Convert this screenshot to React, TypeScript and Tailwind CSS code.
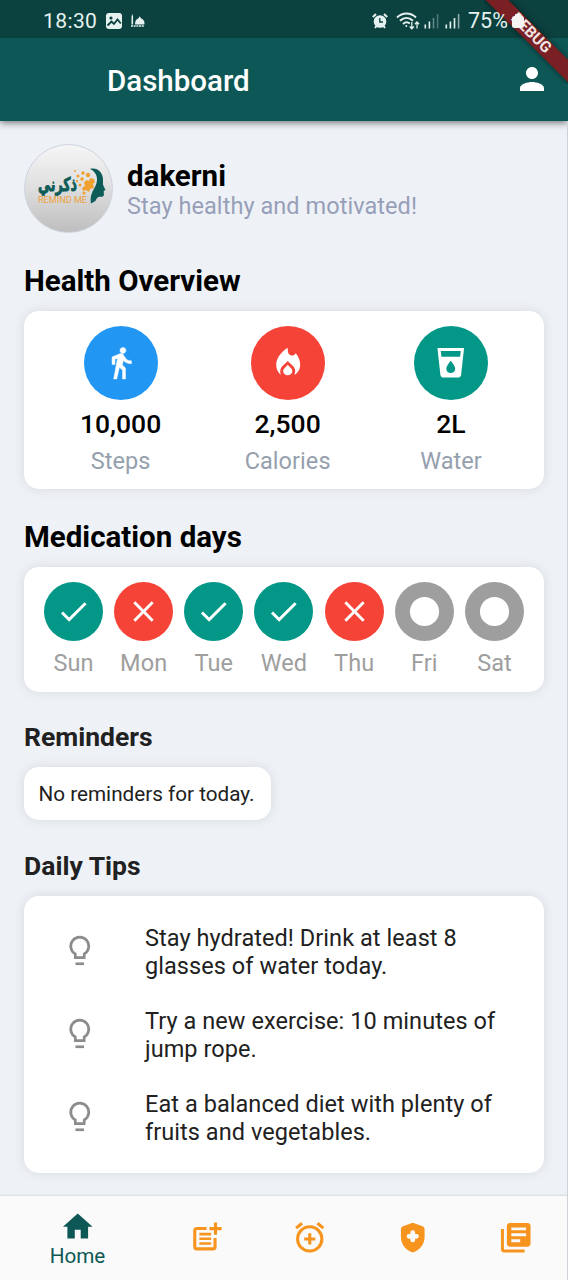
import type { ReactNode } from "react";
import {
  MdCheck,
  MdCircle,
  MdClose,
  MdHome,
  MdLibraryBooks,
  MdLocalDrink,
  MdPerson,
} from "react-icons/md";

type IconComponent = (props: { className?: string }) => ReactNode;

const cardShadow = "bg-white rounded-[15px] shadow-[0_0_12px_rgba(0,0,0,0.1)]";

function WalkIcon({ className }: { className?: string }) {
  return (
    <svg viewBox="0 0 24 24" className={className} fill="currentColor" stroke="currentColor" strokeWidth="0.300">
      <path d="M13.500 5.700c1.100 0 2-.9 2-2s-.9-2-2-2-2 .9-2 2 .9 2 2 2zM9.800 8.900L7.200 23h2.100l1.800-8 2.100 2v6h2v-7.500l-2.100-2 .6-3C14.800 11.700 16.800 12.700 19.200 12.700v-2c-1.900 0-3.500-.9-4.300-2.300l-1-1.600c-.4-.6-1-1-1.700-1-.3 0-.5.1-.8.1L6.100 8.100v5h2V9.600l1.700-.7" />
    </svg>
  );
}

function FlameIcon({ className }: { className?: string }) {
  return (
    <svg viewBox="0 0 24 24" className={className} fill="currentColor">
      <path d="M12 1.900C7 5 4.200 9.500 4.200 13.400c0 3 1.200 5.400 3.300 6.900-.5-1-.7-2-.5-3.300.3-2.500 2.500-3.500 5-6.200 2.500 2.700 4.800 3.700 5 6.200.1 1.300-.1 2.300-.6 3.300 2.400-1.300 4-3.800 4-6.900 0-3-1.200-5.700-3-7.800-.8 1.300-1.700 1.700-2.800 1.500-1.800-.3-2.800-1.600-2.600-5.200z" />
      <path d="M12 13.400c-1.800 2-3.100 2.800-3.100 4.300a3.100 2.800 0 0 0 6.200 0c0-1.500-1.300-2.300-3.100-4.300z" />
    </svg>
  );
}

function BulbIcon({ className }: { className?: string }) {
  return (
    <svg viewBox="0 0 24 24" className={className} fill="none" stroke="currentColor" strokeWidth="1.800">
      <path d="M9 16.700v-2.500a6.100 6.100 0 1 1 6 0v2.500z" />
      <path d="M9.100 20.800h5.800" />
    </svg>
  );
}

function NoteAddIcon({ className }: { className?: string }) {
  return (
    <svg viewBox="0 0 24 24" className={className} fill="none" stroke="currentColor" strokeWidth="2.100">
      <path d="M11.900 5.700H5.200A1.300 1.300 0 0 0 3.900 7v11.200a1.300 1.300 0 0 0 1.300 1.300h11.100a1.300 1.300 0 0 0 1.300-1.300v-6.100" />
      <path d="M7 9.500h8M7 12.700h8M7 15.900h8" strokeWidth="1.800" />
      <path d="M17.900 1.700v8.200M13.800 5.800H22" />
    </svg>
  );
}

function AlarmAddIcon({ className }: { className?: string }) {
  return (
    <svg viewBox="0 0 24 24" className={className} fill="none" stroke="currentColor" strokeWidth="2.100">
      <circle cx="12" cy="12.800" r="8.200" />
      <path d="M12 9v7.600M8.200 12.800h7.600M2.800 5.500l4-3.300M21.200 5.500l-4-3.300" />
    </svg>
  );
}

function ShieldIcon({ className }: { className?: string }) {
  return (
    <svg viewBox="0 0 24 24" className={className}>
      <path fill="currentColor" d="M10.600 2.300 5.400 4.300C4.500 4.600 4 5.400 4 6.300v5.200c0 5 3.500 9.200 8 10.500 4.500-1.300 8-5.500 8-10.500V6.300c0-.9-.5-1.700-1.400-2l-5.200-2c-.9-.4-1.900-.4-2.800 0z" />
      <path d="M12 8.500v5M9.500 11h5" stroke="#fafafa" strokeWidth="3.200" strokeLinecap="round" />
    </svg>
  );
}

function SignalBars({ dim }: { dim: number }) {
  return (
    <svg viewBox="0 0 15 16" className="h-[16px] w-[15px]" fill="#e6f2ef">
      <rect x="0.5" y="11.5" width="1.6" height="4" />
      <rect x="4.6" y="8.5" width="1.6" height="7" />
      <rect x="8.7" y="5" width="1.6" height="10.5" opacity={dim > 1 ? 0.4 : 1} />
      <rect x="12.8" y="1" width="1.6" height="14.5" opacity={dim > 1 ? 0.3 : 0.6} />
    </svg>
  );
}

function StatusBar() {
  return (
    <div className="relative z-10 flex h-[38px] items-center pl-[43px] text-[#e6f2ef]">
      <span className="w-[54px] pt-[3px] text-[21px] leading-[38px] tracking-[0.400px] whitespace-nowrap">18:30</span>
      <svg viewBox="0 0 16 16" className="mt-[3px] ml-[9px] h-[16px] w-[16px]">
        <rect width="16" height="16" rx="3" fill="#e6f2ef" />
        <circle cx="5" cy="5" r="1.6" fill="#0b413f" />
        <path d="M1.5 12.5 5.5 8.5 8 11 11.5 6.5 14.8 10.5" stroke="#0b413f" strokeWidth="1.8" fill="none" />
      </svg>
      <svg viewBox="0 0 14 14" className="mt-[3px] ml-[9px] h-[14px] w-[14px]" fill="#e6f2ef">
        <path d="M1.300 0 2.100 2.500V10.500H.5V2.500zM4.200 10.500C3.500 7 5.500 5.500 7.500 4.300L8.700 2.300 10 4.300c2 1.200 4.200 2.700 3.300 6.200z" />
        <path d="M0 12h13.5" stroke="#e6f2ef" strokeWidth="1.400" strokeDasharray="2 .7" />
      </svg>
      <svg viewBox="0 0 16 16" className="mt-[3px] ml-[227px] h-[16px] w-[16px]">
        <path d="M.8 4 4 1M15.200 4 12 1M3 15l1.500-2M13 15l-1.500-2" stroke="#e6f2ef" strokeWidth="2" />
        <circle cx="8" cy="8.5" r="6.3" fill="#e6f2ef" />
        <path d="M7.800 5v4H11" stroke="#0b413f" strokeWidth="1.3" fill="none" />
      </svg>
      <svg viewBox="0 0 24 18" className="mt-[3px] ml-[8px] h-[18px] w-[24px]" fill="none" stroke="#e6f2ef" strokeWidth="1.9">
        <path d="M1 5.500C6.500 .2 14.500.2 20 5.500M4 8.800c4-3.800 9-3.800 13 0M7 12c2.200-2 4.800-2 6.800-.4" />
        <circle cx="10.3" cy="14" r="1" fill="#e6f2ef" stroke="none" />
        <path d="M15.800 10v6.500M13.700 14.500l2.100 2.200 2.100-2.200M21 16.500V10M18.900 12.200 21 10l2.100 2.200" strokeWidth="1.300" />
      </svg>
      <div className="mt-[3px] ml-[4px]"><SignalBars dim={2} /></div>
      <div className="mt-[3px] ml-[6px]"><SignalBars dim={1} /></div>
      <span className="ml-[8px] w-[43px] pt-[3px] text-[21.500px] leading-[38px] whitespace-nowrap">75%</span>
      <svg viewBox="0 0 12 14" className="mt-[3px] ml-[1px] h-[14px] w-[12px]" fill="#f6f3f2">
        <rect y="2" width="12" height="12" rx="2.500" />
        <rect x="3" width="6" height="4" rx="1" />
      </svg>
    </div>
  );
}

function DebugBanner() {
  return (
    <div className="absolute top-0 right-0 h-[84px] w-[84px] overflow-hidden">
      <div className="absolute top-[27px] left-[-22px] flex h-[16px] w-[140px] rotate-45 items-center justify-center bg-[#7a2024] text-[15.500px] font-bold text-[#f1e4e2] shadow-[0_0_6px_rgba(0,0,0,0.5)]">
        <span className="-mt-px -ml-[4px]">DEBUG</span>
      </div>
    </div>
  );
}

function Logo() {
  return (
    <div className="h-[89px] w-[89px] shrink-0 overflow-hidden rounded-full border border-[#cdd3df] bg-linear-to-b from-[#f6f6f6] via-[#dedede] to-[#bebebe]">
      <svg viewBox="1 1 87 87" className="h-full w-full">
        <text x="14" y="46.500" textLength="39" lengthAdjust="spacingAndGlyphs" fontSize="19" fontWeight="bold" fill="#0d5c58" stroke="#0d5c58" strokeWidth="0.900" fontFamily="DejaVu Sans, sans-serif">ذكرني</text>
        <text x="14" y="58.500" textLength="49" lengthAdjust="spacingAndGlyphs" fontSize="9.500" fill="#eda23c" fontFamily="Roboto, sans-serif">REMIND ME</text>
        <path d="M66 25c7-2 12.500 3 13 10 .2 3.500-.5 5 .5 7l2 4-1.800 1 .2 3.500c-.2 2.500-2 2.500-4.500 2.200-2.200.3-3 2-4 4.300l-4.500 2.500c-.5-5-.3-7.500 1.300-11 2-4.500 4.800-8 4.800-13 0-5-2.500-8.500-7-10.500z" fill="#0d5c58" />
        <g fill="#f0a02f">
          <path d="M60 38l3-2 2 1 1-3 4 1 1 3-2 2 1 4-4 1-1 3-3-2-3 1-1-3 3-2z" />
          <circle cx="59" cy="29" r="1.800" /><circle cx="64" cy="31" r="2.200" />
          <circle cx="54" cy="32" r="1.500" /><circle cx="58" cy="35" r="1.800" />
          <circle cx="51" cy="27" r="1" /><circle cx="56" cy="41" r="1.500" />
          <circle cx="53" cy="37" r="1.200" /><circle cx="60" cy="49" r="1.500" />
        </g>
      </svg>
    </div>
  );
}

function Metric({ icon: Icon, color, value, label }: { icon: IconComponent; color: string; value: string; label: string }) {
  return (
    <div className="flex flex-col items-center">
      <div className={`flex h-[74px] w-[74px] items-center justify-center rounded-full ${color}`}>
        <Icon className="h-[35.500px] w-[35.500px] text-white" />
      </div>
      <div className="mt-[8px] text-[26.500px] leading-[32px] font-medium text-black">{value}</div>
      <div className="mt-[7px] text-[23.500px] leading-[28px] tracking-[0.060px] text-[#959fad]">{label}</div>
    </div>
  );
}

type DayState = "taken" | "missed" | "none";

const days: { name: string; state: DayState }[] = [
  { name: "Sun", state: "taken" },
  { name: "Mon", state: "missed" },
  { name: "Tue", state: "taken" },
  { name: "Wed", state: "taken" },
  { name: "Thu", state: "missed" },
  { name: "Fri", state: "none" },
  { name: "Sat", state: "none" },
];

const dayStyles = {
  taken: { color: "bg-[#039788]", icon: MdCheck },
  missed: { color: "bg-[#f54337]", icon: MdClose },
  none: { color: "bg-[#9e9e9e]", icon: MdCircle },
};

function Day({ name, state }: { name: string; state: DayState }) {
  const { color, icon: Icon } = dayStyles[state];
  return (
    <div className="flex w-[59px] flex-col items-center">
      <div className={`flex h-[59px] w-[59px] items-center justify-center rounded-full ${color}`}>
        <Icon className="h-[35px] w-[35px] text-white" />
      </div>
      <div className="mt-[8px] text-[23.500px] leading-[28px] tracking-[0.060px] text-[#9e9e9e]">{name}</div>
    </div>
  );
}

function Tip({ children }: { children: ReactNode }) {
  return (
    <div className="flex h-[83px] items-center">
      <BulbIcon className="mb-[2px] ml-[38px] h-[35.500px] w-[35.500px] text-[#8c8c8c]" />
      <p className="ml-[47.500px] text-[23.500px] leading-[28.500px] tracking-[0.060px] whitespace-nowrap text-[#212121]">{children}</p>
    </div>
  );
}

const navIcons: IconComponent[] = [NoteAddIcon, AlarmAddIcon, ShieldIcon, MdLibraryBooks];

export default function App() {
  return (
    <div className="relative flex h-[1280px] w-[568px] flex-col overflow-hidden bg-[#eef2f7] font-[Roboto,sans-serif]">
      <header className="relative h-[121px] shrink-0 bg-[#0d5856] shadow-[0_2px_7px_rgba(0,0,0,0.5)]">
        <div className="h-[38px] bg-[#0b413f]">
          <StatusBar />
        </div>
        <DebugBanner />
        <div className="flex h-[83px] items-center justify-between pr-[18px] pl-[107px]">
          <h1 className="pt-[3px] text-[29.500px] font-medium text-white">Dashboard</h1>
          <MdPerson className="mb-[2px] h-[36px] w-[36px] text-white" />
        </div>
      </header>

      <main className="flex flex-1 flex-col px-[24px] pt-[23px]">
        <div className="flex h-[89px] items-center gap-[14px]">
          <Logo />
          <div className="pt-[2px]">
            <div className="text-[29.500px] leading-[32px] font-bold text-black">dakerni</div>
            <div className="text-[23.500px] leading-[28px] tracking-[0.060px] whitespace-nowrap text-[#979fb8]">Stay healthy and motivated!</div>
          </div>
        </div>

        <h2 className="mt-[30px] text-[29.500px] leading-[36px] font-bold text-black">Health Overview</h2>
        <section className={`mt-[12px] flex h-[178px] justify-between px-[56px] pt-[15px] ${cardShadow}`}>
          <Metric icon={WalkIcon} color="bg-[#2196f3]" value="10,000" label="Steps" />
          <Metric icon={FlameIcon} color="bg-[#f54337]" value="2,500" label="Calories" />
          <Metric icon={MdLocalDrink} color="bg-[#039788]" value="2L" label="Water" />
        </section>

        <h2 className="mt-[30px] text-[29.500px] leading-[36px] font-bold text-black">Medication days</h2>
        <section className={`mt-[12px] flex h-[125px] justify-between px-[20px] pt-[15px] ${cardShadow}`}>
          {days.map((d) => <Day key={d.name} {...d} />)}
        </section>

        <h3 className="mt-[29px] text-[26.500px] leading-[32px] font-bold text-[#212121]">Reminders</h3>
        <section className={`mt-[14px] flex h-[53px] w-[247px] items-center pt-[2px] pl-[14.500px] text-[20.700px] whitespace-nowrap text-[#212121] ${cardShadow}`}>
          No reminders for today.
        </section>

        <h3 className="mt-[30px] text-[26.500px] leading-[32px] font-bold text-[#212121]">Daily Tips</h3>
        <section className={`mt-[14px] h-[277px] pt-[14.500px] ${cardShadow}`}>
          <Tip>Stay hydrated! Drink at least 8<br />glasses of water today.</Tip>
          <Tip>Try a new exercise: 10 minutes of<br />jump rope.</Tip>
          <Tip>Eat a balanced diet with plenty of<br />fruits and vegetables.</Tip>
        </section>
      </main>

      <nav className="flex h-[84px] shrink-0 items-center bg-[#fafafa] shadow-[0_-1px_2px_rgba(0,0,0,0.1)]">
        <div className="flex w-[155px] flex-col items-center pt-px text-[#0d5856]">
          <MdHome className="h-[35.500px] w-[35.500px]" />
          <span className="text-[20.700px] leading-[24px]">Home</span>
        </div>
        {navIcons.map((Icon, i) => (
          <div key={i} className="flex w-[103px] justify-center pb-px text-[#f7941d]">
            <Icon className="h-[35.500px] w-[35.500px]" />
          </div>
        ))}
      </nav>
      <div className="absolute top-[121px] right-0 h-[1159px] w-px bg-[#cdd1d8]" />
    </div>
  );
}
